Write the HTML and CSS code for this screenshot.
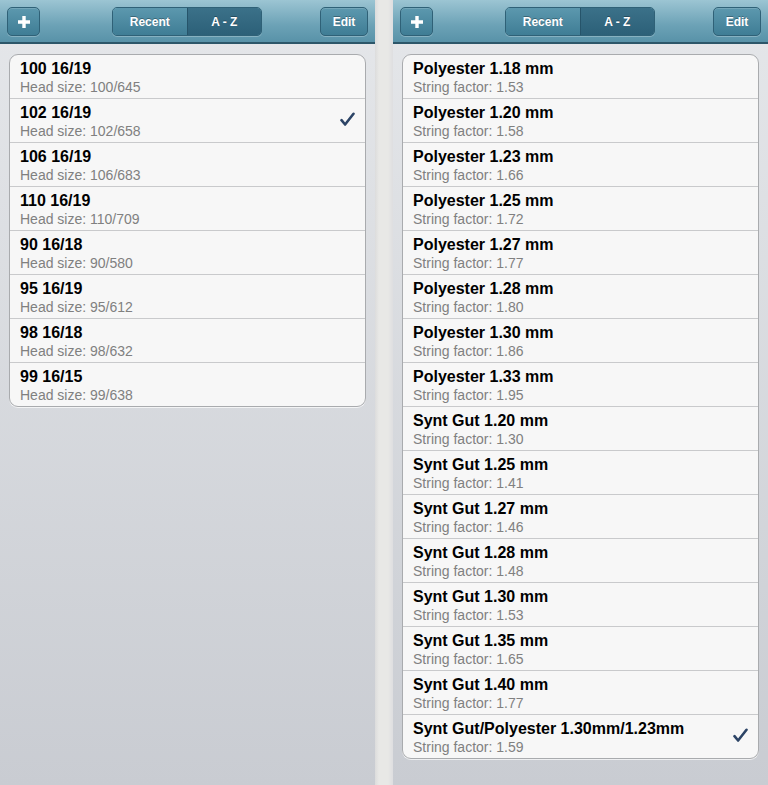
FILE: index.html
```html
<!DOCTYPE html>
<html>
<head>
<meta charset="utf-8">
<link rel="stylesheet" href="styles.css">
</head>
<body>
<div class="screen">
  <section class="pane">
    <header class="bar">
      <button class="btn add"><svg width="16" height="16" viewBox="0 0 16 16"><path d="M8 2v12M2 8h12" stroke="#fff" stroke-width="3.4" stroke-linecap="butt"/></svg></button>
      <div class="seg"><span class="seg-item">Recent</span><span class="seg-item on">A - Z</span></div>
      <button class="btn edit">Edit</button>
    </header>
    <div class="content">
      <ul class="list">
        <li><div class="t">100 16/19</div><div class="s">Head size: 100/645</div></li>
        <li><div class="t">102 16/19</div><div class="s">Head size: 102/658</div><svg class="check" width="15" height="15" viewBox="0 0 15 15"><path d="M1.5 8.2l3.6 4.3L13.5 1.8" fill="none" stroke="#2c4466" stroke-width="2.6" stroke-linecap="round" stroke-linejoin="round"/></svg></li>
        <li><div class="t">106 16/19</div><div class="s">Head size: 106/683</div></li>
        <li><div class="t">110 16/19</div><div class="s">Head size: 110/709</div></li>
        <li><div class="t">90 16/18</div><div class="s">Head size: 90/580</div></li>
        <li><div class="t">95 16/19</div><div class="s">Head size: 95/612</div></li>
        <li><div class="t">98 16/18</div><div class="s">Head size: 98/632</div></li>
        <li><div class="t">99 16/15</div><div class="s">Head size: 99/638</div></li>
      </ul>
    </div>
  </section>
  <div class="gutter"></div>
  <section class="pane">
    <header class="bar">
      <button class="btn add"><svg width="16" height="16" viewBox="0 0 16 16"><path d="M8 2v12M2 8h12" stroke="#fff" stroke-width="3.4" stroke-linecap="butt"/></svg></button>
      <div class="seg"><span class="seg-item">Recent</span><span class="seg-item on">A - Z</span></div>
      <button class="btn edit">Edit</button>
    </header>
    <div class="content">
      <ul class="list">
        <li><div class="t">Polyester 1.18 mm</div><div class="s">String factor: 1.53</div></li>
        <li><div class="t">Polyester 1.20 mm</div><div class="s">String factor: 1.58</div></li>
        <li><div class="t">Polyester 1.23 mm</div><div class="s">String factor: 1.66</div></li>
        <li><div class="t">Polyester 1.25 mm</div><div class="s">String factor: 1.72</div></li>
        <li><div class="t">Polyester 1.27 mm</div><div class="s">String factor: 1.77</div></li>
        <li><div class="t">Polyester 1.28 mm</div><div class="s">String factor: 1.80</div></li>
        <li><div class="t">Polyester 1.30 mm</div><div class="s">String factor: 1.86</div></li>
        <li><div class="t">Polyester 1.33 mm</div><div class="s">String factor: 1.95</div></li>
        <li><div class="t">Synt Gut 1.20 mm</div><div class="s">String factor: 1.30</div></li>
        <li><div class="t">Synt Gut 1.25 mm</div><div class="s">String factor: 1.41</div></li>
        <li><div class="t">Synt Gut 1.27 mm</div><div class="s">String factor: 1.46</div></li>
        <li><div class="t">Synt Gut 1.28 mm</div><div class="s">String factor: 1.48</div></li>
        <li><div class="t">Synt Gut 1.30 mm</div><div class="s">String factor: 1.53</div></li>
        <li><div class="t">Synt Gut 1.35 mm</div><div class="s">String factor: 1.65</div></li>
        <li><div class="t">Synt Gut 1.40 mm</div><div class="s">String factor: 1.77</div></li>
        <li><div class="t">Synt Gut/Polyester 1.30mm/1.23mm</div><div class="s">String factor: 1.59</div><svg class="check" width="15" height="15" viewBox="0 0 15 15"><path d="M1.5 8.2l3.6 4.3L13.5 1.8" fill="none" stroke="#2c4466" stroke-width="2.6" stroke-linecap="round" stroke-linejoin="round"/></svg></li>
      </ul>
    </div>
  </section>
</div>
</body>
</html>
```
FILE: styles.css
```css
* { box-sizing: border-box; }
html, body { margin: 0; padding: 0; }
body {
  font-family: "Liberation Sans", Arial, sans-serif;
  width: 768px;
  height: 785px;
  overflow: hidden;
  background: #e4e4e4;
}
.screen {
  display: flex;
  height: 785px;
}
.pane {
  width: 375px;
  display: flex;
  flex-direction: column;
  background: linear-gradient(#e5e7ea, #c9ccd2);
}
.gutter {
  width: 18px;
  background: linear-gradient(90deg, #dcdcdc 0, #e8e8e6 4px, #e8e8e6 13px, #dedee0 18px);
}
.bar {
  height: 44px;
  flex: none;
  display: flex;
  align-items: center;
  justify-content: space-between;
  padding: 1px 7px 0 7px;
  background: linear-gradient(#9cc5d3, #6ca2b6 60%, #5892a8);
  border-bottom: 2px solid #2c5669;
}
.btn {
  height: 29px;
  border: 1px solid #2f6177;
  border-radius: 5px;
  background: linear-gradient(#5c98ae, #3f7d95);
  box-shadow: inset 0 1px 0 rgba(255,255,255,0.15), 0 1px 0 rgba(255,255,255,0.25);
  color: #fff;
  font-family: "Liberation Sans", Arial, sans-serif;
  font-weight: bold;
  font-size: 12px;
  padding: 0;
  display: flex;
  align-items: center;
  justify-content: center;
}
.add { width: 33px; }
.edit { width: 48px; text-shadow: 0 -1px 0 rgba(0,0,0,0.3); }
.seg {
  display: flex;
  width: 150px;
  height: 29px;
  margin-left: 14px;
  border: 1px solid #2f6177;
  border-radius: 5px;
  overflow: hidden;
  box-shadow: 0 1px 0 rgba(255,255,255,0.25);
}
.seg-item {
  flex: 1;
  display: flex;
  align-items: center;
  justify-content: center;
  color: #fff;
  font-weight: bold;
  font-size: 12px;
  background: linear-gradient(#5c98ae, #3f7d95);
  text-shadow: 0 -1px 0 rgba(0,0,0,0.3);
}
.seg-item.on {
  background: linear-gradient(#3b7189, #2c6078);
  border-left: 1px solid #26546a;
}
.content {
  flex: 1;
  padding: 10px 9px 0 9px;
}
.list {
  list-style: none;
  margin: 0;
  padding: 0;
  background: #f7f7f7;
  border: 1px solid #a9abae;
  border-radius: 9px;
  overflow: hidden;
  box-shadow: 0 1px 0 rgba(255,255,255,0.7);
}
.list li {
  position: relative;
  height: 44px;
  padding: 4px 10px 0 10px;
  border-top: 1px solid #c9cacc;
}
.list li:first-child { border-top: none; height: 43px; }
.t {
  font-weight: bold;
  font-size: 16px;
  line-height: 20px;
  color: #000;
  white-space: nowrap;
}
.s {
  font-size: 14px;
  line-height: 17px;
  color: #808080;
  white-space: nowrap;
}
.check {
  position: absolute;
  right: 10px;
  top: 13px;
}
```
